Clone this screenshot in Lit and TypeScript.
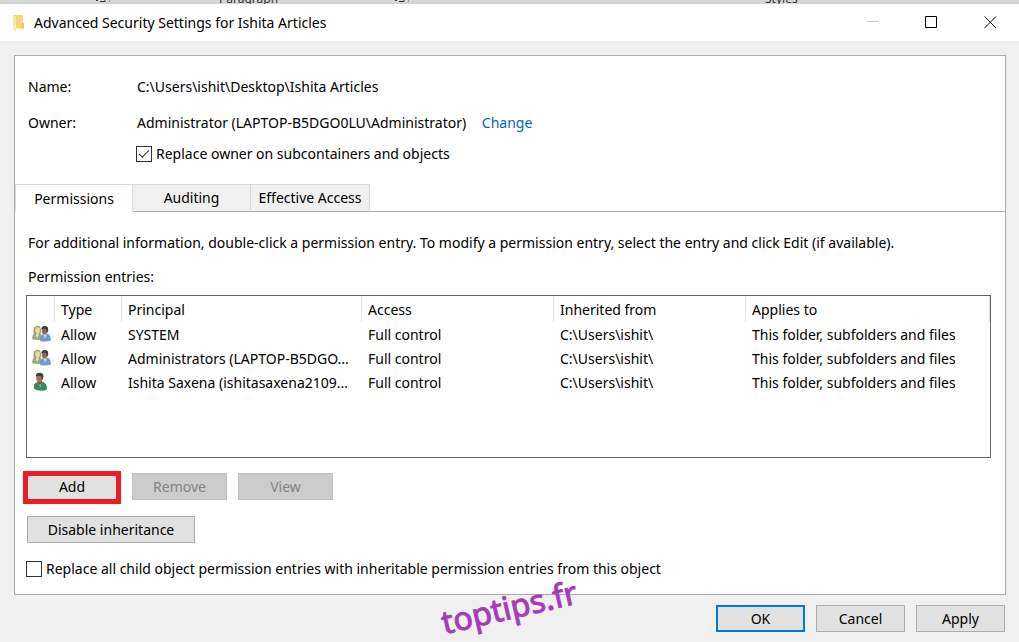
import { LitElement, html, css, svg } from "lit";
import { customElement, state } from "lit/decorators.js";

interface Entry {
  kind: "group" | "user";
  type: string;
  principal: string;
  access: string;
  from: string;
  applies: string;
}

const ENTRIES: Entry[] = [
  { kind: "group", type: "Allow", principal: "SYSTEM", access: "Full control", from: "C:\\Users\\ishit\\", applies: "This folder, subfolders and files" },
  { kind: "group", type: "Allow", principal: "Administrators (LAPTOP-B5DGO...", access: "Full control", from: "C:\\Users\\ishit\\", applies: "This folder, subfolders and files" },
  { kind: "user", type: "Allow", principal: "Ishita Saxena (ishitasaxena2109...", access: "Full control", from: "C:\\Users\\ishit\\", applies: "This folder, subfolders and files" },
];

const TABS = ["Permissions", "Auditing", "Effective Access"];

const groupIcon = html`<svg class="person" width="19" height="20" viewBox="0 0 19 20" aria-hidden="true">
  ${svg`
  <path d="M0.3 15.5C0 11.5 1 9.5 3.5 8.8L7.5 8.6C9 9.5 9.5 12 9.2 16Z" fill="#8fae6e"/>
  <path d="M3.5 9L5 14.5L7.5 9Z" fill="#dfe8c8"/>
  <path d="M2 9.6C1 5 1.8 2 5.2 1.8C8.6 1.8 9.2 5 8.8 9.2C7 10 4 10.2 2 9.6Z" fill="#a8935c"/>
  <ellipse cx="5.7" cy="6.5" rx="2.2" ry="3.2" fill="#efd9ba"/>
  <path d="M2.8 6C2.8 3.2 4.4 2.3 6 2.6C5.8 4.2 4.6 5 3.6 5.4L3.4 8.4Z" fill="#d8c68b"/>
  <path d="M8.2 17C8 12.6 9 10.6 11.2 10L14.8 9.6C17.8 10.4 18.9 12.4 18.8 16.6C15.5 17.8 11 17.8 8.2 17Z" fill="#7399cf"/>
  <path d="M11 10L13.2 15L15 9.8Z" fill="#c3d5ec"/>
  <ellipse cx="12.6" cy="6.8" rx="2.8" ry="3.8" fill="#936a4c"/>
  <path d="M9.4 5.2C9.4 2.8 11 1.8 13 2C15.8 2.2 16.8 4 16 7.6L14.8 8.8C14.8 6.2 14.4 5 13.2 4.4C12 5 10.6 5 9.4 5.2Z" fill="#403c42"/>`}
</svg>`;

const userIcon = html`<svg class="person" width="19" height="20" viewBox="0 0 19 20" aria-hidden="true">
  ${svg`
  <path d="M2 16.5C1.4 13 2.4 10.8 5.6 10.2L9.6 9.6C13.4 10.6 15 13 15 17.5C11 19.4 5.6 19.2 2 16.5Z" fill="#358765"/>
  <path d="M5.4 10.4L8.4 15.5L9.6 9.8Z" fill="#8dc4aa"/>
  <path d="M5.2 8H9.8V11L7.6 13L5.6 11Z" fill="#7b573f"/>
  <ellipse cx="7.2" cy="6" rx="3" ry="4" fill="#a47555"/>
  <path d="M3.6 4.4C3.8 1.6 5.6 0.6 8 0.8C11 1 12 3.2 11 7L9.8 8.2C9.8 5.8 9.2 4.6 8 3.8C6.6 4.4 4.8 4.4 3.6 4.4Z" fill="#3a3f40"/>`}
</svg>`;

const launcher = html`<svg width="14" height="4" viewBox="0 0 14 4">
  <path d="M0 0.5H2M4 1.5H9V-1" fill="none" stroke="#333" /><path d="M13.5 0V2" stroke="#999" />
</svg>`;

@customElement("app-root")
export class AppRoot extends LitElement {
  @state() private tab = 0;

  static styles = css`
    :host {
      display: flex;
      flex-direction: column;
      min-height: 100vh;
      box-sizing: border-box;
      position: relative;
      background: #f0f0f0;
      color: #000;
      font: 14px/20px "Noto Sans", "Open Sans", sans-serif;
      overflow: hidden;
    }
    button, input {
      font: inherit;
      color: inherit;
      margin: 0;
      box-sizing: border-box;
    }
    .behind {
      height: 4px;
      background: linear-gradient(#d8d8d8 2px, #cacaca 3px, #e2e2e2 4px);
      overflow: hidden;
      display: grid;
      grid-template-columns: 96px 123px 176px 370px 1fr;
      grid-template-rows: 4px;
      align-items: end;
      font-size: 12px;
      line-height: 10px;
      color: #333;
    }
    .behind svg { display: block; }
    .behind .first { grid-column: 2; }
    .titlebar {
      display: flex;
      align-items: center;
      height: 37px;
      background: #fff;
      padding-left: 12px;
    }
    h1 { flex: 1; font: inherit; margin: 0 0 0 10px; }
    .caption { display: flex; gap: 1px; height: 100%; }
    .caption button {
      width: 58px;
      padding: 0;
      border: 0;
      background: none;
      display: grid;
      place-items: center;
    }
    .panel {
      flex: 1;
      margin: 14px 13px 0 14px;
      border: 1px solid #adadad;
      background: #fff;
    }
    .facts {
      display: grid;
      grid-template-columns: 109px 1fr;
      row-gap: 16px;
      margin: 0;
      padding: 21px 13px 0;
    }
    dd { margin: 0; }
    a { color: #0066cc; text-decoration: none; margin-left: 12px; }
    .check { display: flex; align-items: center; gap: 4px; }
    .check input {
      appearance: none;
      width: 16px;
      height: 16px;
      border: 1px solid #333;
      background: #fff;
      display: grid;
      place-items: center;
    }
    .check input:checked::after {
      content: "";
      width: 9px;
      height: 4px;
      box-sizing: content-box;
      border: solid #333;
      border-width: 0 0 1px 1px;
      transform: translateY(-2px) rotate(-45deg);
    }
    .owner { padding: 11px 13px 0 121px; }
    .tabs {
      display: flex;
      height: 28px;
      margin-top: 20px;
      background: linear-gradient(#adadad, #adadad) bottom / 100% 1px no-repeat;
    }
    .tabs button {
      border: 1px solid #d9d9d9;
      border-left: 0;
      border-bottom-color: #adadad;
      background: #f0f0f0;
      width: 118px;
      padding: 0;
      white-space: nowrap;
    }
    .tabs button.wide { width: 119px; }
    .tabs button.active {
      border-left: 1px solid #d9d9d9;
      border-bottom-color: #fff;
      background: #fff;
      padding-top: 1px;
    }
    .body { padding: 21px 14px 14px 11px; }
    .body p { margin: 0 2px 14px; }
    .list {
      border: 1px solid #646464;
      height: 161px;
      margin-top: -6px;
      overflow: hidden;
    }
    table { width: 100%; border-collapse: separate; border-spacing: 0; table-layout: fixed; }
    th, td { font-weight: 400; text-align: left; padding: 0 0 0 6px; white-space: nowrap; }
    th { height: 26px; padding-top: 1px; box-sizing: border-box; border-right: 1px solid #e3e3e3; }
    td { height: 24px; padding-top: 2px; box-sizing: border-box; }
    td.icon { padding: 0 0 0 5px; }
    .icon { width: 28px; padding-left: 0; }
    .type { width: 67px; }
    .principal { width: 240px; }
    .access { width: 192px; }
    .from { width: 192px; }
    .person { display: block; }
    .actions { display: flex; align-items: flex-start; gap: 11px; margin: 13px 0 12px -3px; }
    .btn {
      height: 27px;
      border: 1px solid #adadad;
      background: #e1e1e1;
      padding: 0 10px;
      white-space: nowrap;
      line-height: 20px;
    }
    .actions .btn { width: 95px; margin-top: 2px; }
    .actions .add { width: 98px; height: 33px; margin-top: 0; border: 5px solid #ed1c24; padding: 0 0 2px; }
    .btn:disabled { background: #ccc; border-color: #bfbfbf; color: #838383; }
    .inherit { width: 168px; margin: 0 1px 16px; display: block; }
    .footer { display: flex; justify-content: flex-end; gap: 11px; padding: 10px 14px; }
    .footer .btn { width: 89px; }
    .footer .ok { border: 2px solid #0078d7; }
    .mark {
      position: absolute;
      left: 440px;
      top: 585px;
      font-size: 32px;
      line-height: 44px;
      color: #a63db8;
      -webkit-text-stroke: 1px #a63db8;
      transform: rotate(-13deg);
      pointer-events: none;
    }
  `;

  render() {
    return html`
      <div class="behind" aria-hidden="true">
        <span class="first">${launcher}</span><span>Paragraph</span><span>${launcher}</span><span>Styles</span>
      </div>
      <header class="titlebar">
        <svg width="12" height="18" viewBox="0 0 12 18" aria-hidden="true">
          <path d="M1 1H11V14.5H1Z" fill="#f6d67a" />
          <path d="M1 1L4 3V17.5L1 15Z" fill="#fbe7a8" />
          <path d="M9.5 9H12V14.5H9.5Z" fill="#efc85c" />
        </svg>
        <h1>Advanced Security Settings for Ishita Articles</h1>
        <div class="caption">
          <button aria-label="Minimize"><svg width="13" height="13"><path d="M1 5.5H13" stroke="#c8c8c8" /></svg></button>
          <button aria-label="Maximize"><svg width="13" height="13"><path d="M.5 .5H11.5V11.5H.5Z" fill="none" stroke="#000" /></svg></button>
          <button aria-label="Close"><svg width="13" height="13"><path d="M.5 .5L12 12M12 .5L.5 12" stroke="#000" /></svg></button>
        </div>
      </header>
      <main class="panel">
        <dl class="facts">
          <dt>Name:</dt>
          <dd>C:\\Users\\ishit\\Desktop\\Ishita Articles</dd>
          <dt>Owner:</dt>
          <dd>Administrator (LAPTOP-B5DGO0LU\\Administrator) <a href="#">Change</a></dd>
        </dl>
        <div class="check owner">
          <input type="checkbox" id="owner" checked />
          <label for="owner">Replace owner on subcontainers and objects</label>
        </div>
        <div class="tabs" role="tablist">
          ${TABS.map(
            (name, i) => html`<button
              role="tab"
              class="${i === this.tab ? "active" : ""} ${i === 2 ? "wide" : ""}"
              aria-selected=${i === this.tab}
              @click=${() => (this.tab = i)}
            >${name}</button>`
          )}
        </div>
        <section class="body">
          <p>For additional information, double-click a permission entry. To modify a permission entry, select the entry and click Edit (if available).</p>
          <p>Permission entries:</p>
          <div class="list">
            <table aria-label="Permission entries">
              <thead>
                <tr>
                  <th class="icon"></th>
                  <th class="type">Type</th>
                  <th class="principal">Principal</th>
                  <th class="access">Access</th>
                  <th class="from">Inherited from</th>
                  <th>Applies to</th>
                </tr>
              </thead>
              <tbody>
                ${ENTRIES.map(
                  (e) => html`<tr>
                    <td class="icon">${e.kind === "group" ? groupIcon : userIcon}</td>
                    <td>${e.type}</td>
                    <td>${e.principal}</td>
                    <td>${e.access}</td>
                    <td>${e.from}</td>
                    <td>${e.applies}</td>
                  </tr>`
                )}
              </tbody>
            </table>
          </div>
          <div class="actions">
            <button class="btn add">Add</button>
            <button class="btn" disabled>Remove</button>
            <button class="btn" disabled>View</button>
          </div>
          <button class="btn inherit">Disable inheritance</button>
          <div class="check">
            <input type="checkbox" id="children" />
            <label for="children">Replace all child object permission entries with inheritable permission entries from this object</label>
          </div>
        </section>
      </main>
      <footer class="footer">
        <button class="btn ok">OK</button>
        <button class="btn">Cancel</button>
        <button class="btn">Apply</button>
      </footer>
      <div class="mark">toptips.fr</div>
    `;
  }
}
